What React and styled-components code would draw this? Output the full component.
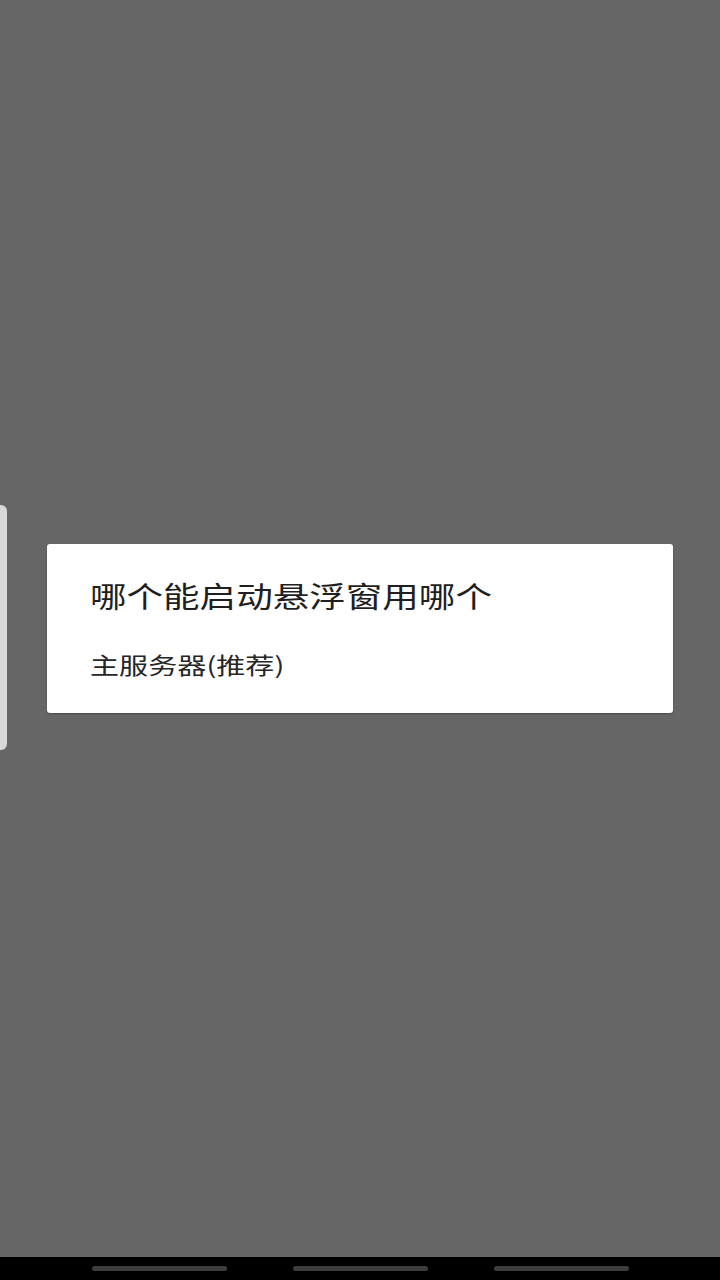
import React from 'react';
import styled, { createGlobalStyle } from 'styled-components';

const GlobalStyle = createGlobalStyle`
    html, body {
        margin: 0;
        padding: 0;
        background: #666666;
    }
    body {
        font-family: "Noto Sans CJK SC", "Noto Sans", sans-serif;
    }
`;

const Screen = styled.div`
    position: relative;
    display: flex;
    flex-direction: column;
    width: 720px;
    height: 1280px;
    background: #666666;
    overflow: hidden;
`;

const Stage = styled.main`
    flex: 1;
    display: flex;
    align-items: center;
    justify-content: center;
`;

const Dialog = styled.section`
    width: 626px;
    box-sizing: border-box;
    padding: 33px 43px 34px;
    background: #ffffff;
    border-radius: 3px;
    box-shadow: 0 1px 2px rgba(0, 0, 0, 0.28);
`;

// the source capture is stretched horizontally, so glyphs are widened
const Title = styled.h2`
    margin: 0;
    font-size: 29px;
    line-height: 36px;
    font-weight: 400;
    color: #1f1f1f;
    white-space: nowrap;
    transform: scaleX(1.26);
    transform-origin: left center;
`;

const Option = styled.div`
    margin-top: 36px;
    font-size: 23px;
    line-height: 30px;
    color: #262626;
    white-space: nowrap;
    transform: scaleX(1.265);
    transform-origin: left center;
`;

const EdgeHandle = styled.div`
    position: absolute;
    left: 0;
    top: 505px;
    width: 7px;
    height: 245px;
    background: #d8d8d8;
    border-radius: 0 6px 6px 0;
`;

const NavBar = styled.nav`
    height: 23px;
    background: #000000;
    display: flex;
    align-items: center;
    justify-content: center;
    gap: 66px;
`;

const NavPill = styled.span`
    width: 135px;
    height: 5px;
    border-radius: 3px;
    background: #3d3d3d;
`;

export default function App() {
    return (
        <>
            <GlobalStyle />
            <Screen>
                <Stage>
                    <Dialog>
                        <Title>哪个能启动悬浮窗用哪个</Title>
                        <Option>主服务器(推荐)</Option>
                    </Dialog>
                </Stage>
                <NavBar>
                    <NavPill />
                    <NavPill />
                    <NavPill />
                </NavBar>
                <EdgeHandle />
            </Screen>
        </>
    );
}
